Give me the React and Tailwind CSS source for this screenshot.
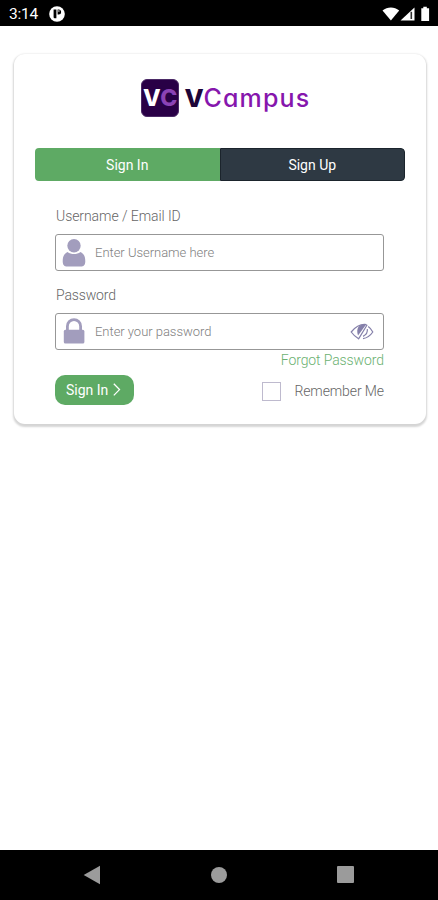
import React from "react";

function StatusBar() {
  return (
    <header className="flex h-[25.5px] shrink-0 items-center justify-between bg-black pl-[9px] pr-[6px] pt-[2px]">
      <div className="flex items-center gap-[10px] text-white">
        <span className="w-[30px] whitespace-nowrap pt-px text-[15.5px] leading-none tracking-[-0.25px]">3:14</span>
        <svg className="size-4" viewBox="0 0 16 16" aria-hidden="true">
          <circle cx="8" cy="8" r="7.8" fill="#fff" />
          <path d="M4.6 3.6h2.8v8.6H5.6a1 1 0 0 1-1-1z" fill="#000" />
          <path d="M8.6 3.6h1a2.5 2.5 0 0 1 0 5h-1z" fill="#000" />
          <circle cx="9.9" cy="5" r=".7" fill="#fff" />
        </svg>
      </div>
      <svg className="h-4 w-[50px]" viewBox="0 0 50 16" aria-hidden="true">
        <path d="M.5 4.4C5.4.4 12.3.4 17.2 4.4L8.9 14.6z" fill="#fff" />
        <path d="M32.5 1.4V14.6H18.5z" fill="#fff" />
        <path d="M29.3 5.8V13" stroke="#333" strokeWidth="1.6" />
        <path d="M39.3 2.3h2V.7h3.5v1.6h2.3V15h-7.8V2.3z" fill="#fff" />
      </svg>
    </header>
  );
}

function Logo() {
  return (
    <div className="flex h-[38px] items-center pl-[127px]" aria-label="VCampus">
      <div className="flex h-[38px] w-[38px] shrink-0 items-center justify-center rounded-[6px] border border-[#4b2a66] bg-[#290046] font-['Inter'] text-[23px] font-extrabold leading-none tracking-[-0.5px] text-white">
        <span>V</span>
        <span className="text-[#8b42b5]">C</span>
      </div>
      <div className="ml-[5.5px] whitespace-nowrap font-['Inter'] text-[25px] font-medium leading-none tracking-[1.15px] text-[#8616ad] [font-feature-settings:'cv11']">
        <span className="font-extrabold tracking-[-0.3px] text-[#1d0538]">V</span>Campus
      </div>
    </div>
  );
}

function UserIcon() {
  return (
    <svg className="h-7 w-6 shrink-0" viewBox="0 0 24 28" fill="#a29dbd" aria-hidden="true">
      <circle cx="12" cy="6.8" r="6.7" />
      <path d="M5.6 12.9C2.2 14.4.7 17.4.7 22.2c0 3.9 1.8 5.3 4.4 5.3h13.8c2.6 0 4.4-1.4 4.4-5.3 0-4.8-1.5-7.8-4.9-9.3C15 15.7 9 15.7 5.6 12.9z" />
    </svg>
  );
}

function LockIcon() {
  return (
    <svg className="h-7 w-6 shrink-0" viewBox="0 0 24 28" aria-hidden="true">
      <path d="M5.4 13V8.2a6.6 6.6 0 0 1 13.2 0V13" fill="none" stroke="#a29dbd" strokeWidth="2.8" />
      <rect x="1.8" y="11.8" width="20.6" height="13.8" rx="1.6" fill="#a29dbd" />
    </svg>
  );
}

function HiddenEyeIcon() {
  return (
    <svg className="h-[18px] w-6 shrink-0" viewBox="0 0 24 18" fill="none" stroke="#8580aa" strokeWidth="1.2" aria-hidden="true">
      <path d="M16.4 1.6C10.5.8 5.5 3.8 1.2 9c2 2.8 4.5 5 7.4 6.8L17.2 1.8" />
      <path d="M8.4 4C7 6.4 6.8 8.6 8 12.6L16 1.8C13 1.2 10.4 2 8.4 4z" fill="#8580aa" stroke="none" />
      <path d="M18.2 3.6C20 4.9 21.6 6.7 22.8 9c-2.4 3.6-5.6 6-9.8 6.6M17.3 6.2c.5 3.4-1 5.6-4.2 7.2" />
    </svg>
  );
}

function Field({ label, placeholder, icon, trailing, labelTracking, textTracking }) {
  return (
    <div>
      <div className={"h-[26px] whitespace-nowrap pl-[1px] text-[14px] font-light leading-[17px] text-[#666] " + labelTracking}>{label}</div>
      <div className="flex h-[37px] items-center rounded-[3px] border border-[#979797] pl-[6px] pr-[9px]">
        {icon}
        <span className={"ml-[9px] flex-1 whitespace-nowrap text-[13px] font-light leading-none text-[#808080] " + textTracking}>{placeholder}</span>
        {trailing}
      </div>
    </div>
  );
}

export default function App() {
  return (
    <div className="flex h-[900px] w-[438px] flex-col overflow-hidden bg-white font-['Roboto',sans-serif]">
      <StatusBar />
      <main className="flex-1 pl-[14px] pr-[12.5px] pt-[28px]">
        <section className="h-[370px] rounded-[11px] bg-white pt-[25.5px] shadow-[0_1.5px_2px_1px_rgba(0,0,0,0.17)]">
          <Logo />
          <div className="ml-[21px] mt-[31px] flex h-[34px] w-[370px] overflow-hidden rounded-[4px] pb-px text-[14px] leading-none text-white">
            <div className="flex w-[184.5px] items-center justify-center rounded-bl-[4px] bg-[#5eaa64]">Sign In</div>
            <div className="flex flex-1 items-center justify-center rounded-r-[4px] border border-[#1b242c] bg-[#2e3943]">Sign Up</div>
          </div>
          <div className="ml-[41px] mt-[26px] w-[329px]">
            <Field label="Username / Email ID" placeholder="Enter Username here" icon={<UserIcon />} labelTracking="tracking-[-0.07px]" textTracking="tracking-[-0.02px]" />
            <div className="mt-[16px]">
              <Field label="Password" placeholder="Enter your password" icon={<LockIcon />} trailing={<HiddenEyeIcon />} labelTracking="tracking-[-0.15px]" textTracking="tracking-[-0.03px]" />
            </div>
            <div className="mt-[2px] text-right text-[14px] font-light leading-[16px] tracking-[-0.1px] text-[#6bb171]">Forgot Password</div>
            <div className="mt-[7px] flex h-[30px] items-center justify-between">
              <button className="flex h-[29.5px] w-[79px] items-center rounded-[10px] bg-[#5eaa64] pb-px pl-[11px] text-[14px] leading-none text-white">
                Sign In
                <svg className="ml-[2px] size-[14px]" viewBox="0 0 14 14" fill="none" stroke="#fff" strokeWidth="1.3" aria-hidden="true">
                  <path d="m3.8.8 5.7 5.8-5.7 5.8" />
                </svg>
              </button>
              <div className="flex items-center pt-[3px] text-[14px] font-light leading-none tracking-[-0.1px] text-[#666]">
                <span className="mr-[13px] size-[19px] border border-[#bebace]" />
                <span className="-mt-px">Remember Me</span>
              </div>
            </div>
          </div>
        </section>
      </main>
      <nav className="flex h-[50.5px] shrink-0 items-center bg-black pl-[83px]">
        <svg className="h-5 w-[18px]" viewBox="0 0 18 20" fill="#9b9b9b" aria-hidden="true"><path d="M.7 10 17 .8v18.4z" /></svg>
        <span className="ml-[110px] size-4 rounded-full bg-[#9b9b9b]" />
        <span className="ml-[110px] size-[17px] rounded-[1px] bg-[#9b9b9b]" />
      </nav>
    </div>
  );
}
